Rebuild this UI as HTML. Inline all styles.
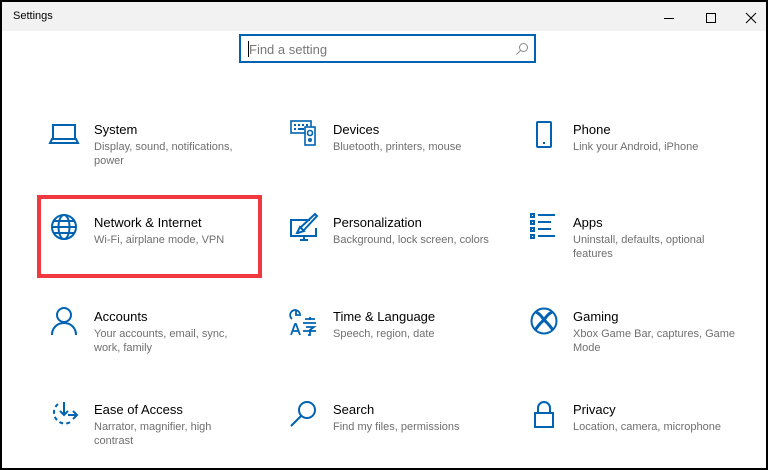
<!DOCTYPE html><html><head><style>
*{margin:0;padding:0;box-sizing:border-box}
body{width:768px;height:470px;background:#000;position:relative;overflow:hidden;font-family:"Liberation Sans",sans-serif}
.win{position:absolute;left:2px;top:2px;width:764px;height:466px;background:#fff}
.tb{position:absolute;left:0;top:0;width:764px;height:29px;background:#f2f2f2}
.tb .t{position:absolute;left:11px;top:8px;font-size:11px;color:#000}
.search{position:absolute;left:237px;top:32px;width:297px;height:29px;border:2px solid #0063b1;background:#fff}
.search span{position:absolute;left:8px;top:6px;font-size:13px;color:#777}
.search i{position:absolute;left:7px;top:5px;width:1px;height:16px;background:#000}
.it{position:absolute}
.it .h{font-size:13px;color:#000;line-height:16px}
.it .d{font-size:11px;color:#6f6f6f;line-height:14px;margin-top:2px;width:150px}
svg.ic{position:absolute;width:32px;height:32px}
.red{position:absolute;left:35px;top:193px;width:225px;height:83px;border:4px solid #f0393f}
</style></head><body><div class="win">
<div class="tb"><div class="t">Settings</div>
<svg style="position:absolute;left:660px;top:9px" width="100" height="14"><line x1="2" y1="7.5" x2="12" y2="7.5" stroke="#000" stroke-width="1"/><rect x="44.5" y="2.5" width="9" height="9" fill="none" stroke="#000"/><path d="M84 2L94 12M94 2L84 12" stroke="#000"/></svg></div>
<div class="search"><i></i><span>Find a setting</span>
<svg style="position:absolute;right:5px;top:6px" width="14" height="14"><circle cx="8.5" cy="5.5" r="4" fill="none" stroke="#888"/><line x1="5.5" y1="8.5" x2="1.5" y2="12.5" stroke="#888"/></svg></div>
<div class="red"></div>
<svg class="ic" style="left:46px;top:116px" viewBox="0 0 32 32" fill="none" stroke="#0063b1" stroke-width="2"><rect x="5" y="7" width="22" height="14"/><path d="M2 25h28l-2-4H4z"/></svg>
<div class="it" style="left:92px;top:120px"><div class="h">System</div><div class="d">Display, sound, notifications, power</div></div>
<svg class="ic" style="left:286px;top:116px" viewBox="0 0 32 32" fill="none" stroke="#0063b1" stroke-width="1.6"><rect x="3" y="3" width="20" height="12"/><path d="M6 7h2M10 7h2M14 7h2M18 7h2M6 11h2M18 11h2M10 11h6" stroke-width="2"/><rect x="17" y="9" width="10" height="18" fill="#fff"/><circle cx="22" cy="15" r="2.5"/><circle cx="22" cy="22" r="1.2"/></svg>
<div class="it" style="left:331px;top:120px"><div class="h">Devices</div><div class="d" style="width:180px">Bluetooth, printers, mouse</div></div>
<svg class="ic" style="left:526px;top:116px" viewBox="0 0 32 32" fill="none" stroke="#0063b1" stroke-width="2"><rect x="9" y="4" width="14" height="25" rx="1"/><line x1="15" y1="25" x2="17" y2="25"/></svg>
<div class="it" style="left:571px;top:120px"><div class="h">Phone</div><div class="d">Link your Android, iPhone</div></div>

<svg class="ic" style="left:46px;top:209px" viewBox="0 0 32 32" fill="none" stroke="#0063b1" stroke-width="2"><circle cx="16" cy="16" r="12"/><ellipse cx="16" cy="16" rx="5.5" ry="12"/><path d="M4 16h24M6 10h20M6 22h20"/></svg>
<div class="it" style="left:92px;top:213px"><div class="h">Network &amp; Internet</div><div class="d">Wi-Fi, airplane mode, VPN</div></div>
<svg class="ic" style="left:286px;top:209px" viewBox="0 0 32 32" fill="none" stroke="#0063b1" stroke-width="2"><path d="M22 9H3v16h25V17"/><path d="M12 29h8M16 25v4"/><path d="M9 22l3-6 4 4-6 2zM13 16L27 3l2 2-13 14" /></svg>
<div class="it" style="left:331px;top:213px"><div class="h">Personalization</div><div class="d" style="width:180px">Background, lock screen, colors</div></div>
<svg class="ic" style="left:526px;top:209px" viewBox="0 0 32 32" fill="none" stroke="#0063b1" stroke-width="2"><rect x="3" y="3" width="3" height="3"/><rect x="3" y="10" width="3" height="3"/><rect x="3" y="17" width="3" height="3"/><rect x="3" y="24" width="3" height="3"/><path d="M10 4h17M10 11h13M10 18h13M10 25h17"/></svg>
<div class="it" style="left:571px;top:213px"><div class="h">Apps</div><div class="d">Uninstall, defaults, optional features</div></div>

<svg class="ic" style="left:46px;top:303px" viewBox="0 0 32 32" fill="none" stroke="#0063b1" stroke-width="2"><circle cx="16" cy="10" r="7"/><path d="M4 30c0-7 5-12 12-12s12 5 12 12"/></svg>
<div class="it" style="left:92px;top:307px"><div class="h">Accounts</div><div class="d">Your accounts, email, sync, work, family</div></div>
<svg class="ic" style="left:286px;top:303px" viewBox="0 0 32 32" fill="none" stroke="#0063b1" stroke-width="1.8"><path d="M12 11a5 5 0 1 0-8 3"/><path d="M8 5v5h3"/><path d="M3 30l4-11h1l4 11M5 26h6"/><path d="M17 14h10M22 12v3M15 18h13M18 22h8l-4 3v5h-2M15 26h13"/></svg>
<div class="it" style="left:331px;top:307px"><div class="h">Time &amp; Language</div><div class="d">Speech, region, date</div></div>
<svg class="ic" style="left:526px;top:303px" viewBox="0 0 32 32" fill="none" stroke="#0063b1" stroke-width="2"><circle cx="16" cy="16" r="12.5"/><path d="M8 7c4 2 6 5 8 8 2-3 4-6 8-8M7 25c3-4 6-8 9-10 3 2 6 6 9 10" stroke-width="3"/></svg>
<div class="it" style="left:571px;top:307px"><div class="h">Gaming</div><div class="d" style="width:172px">Xbox Game Bar, captures, Game Mode</div></div>

<svg class="ic" style="left:46px;top:396px" viewBox="0 0 32 32" fill="none" stroke="#0063b1" stroke-width="2"><path d="M10 6a11 11 0 1 0 14 17" stroke-dasharray="4 3"/><path d="M16 4v13M12 13l4 4 4-4M20 17h9M25 13l4 4-4 4"/></svg>
<div class="it" style="left:92px;top:400px"><div class="h">Ease of Access</div><div class="d">Narrator, magnifier, high contrast</div></div>
<svg class="ic" style="left:286px;top:396px" viewBox="0 0 32 32" fill="none" stroke="#0063b1" stroke-width="2"><circle cx="19" cy="12" r="8"/><path d="M13 18L3 28"/></svg>
<div class="it" style="left:331px;top:400px"><div class="h">Search</div><div class="d" style="width:180px">Find my files, permissions</div></div>
<svg class="ic" style="left:526px;top:396px" viewBox="0 0 32 32" fill="none" stroke="#0063b1" stroke-width="2"><rect x="7" y="15" width="18" height="14"/><path d="M10 15V10a6 6 0 0 1 12 0v5"/></svg>
<div class="it" style="left:571px;top:400px"><div class="h">Privacy</div><div class="d" style="width:170px">Location, camera, microphone</div></div>
</div></body></html>
